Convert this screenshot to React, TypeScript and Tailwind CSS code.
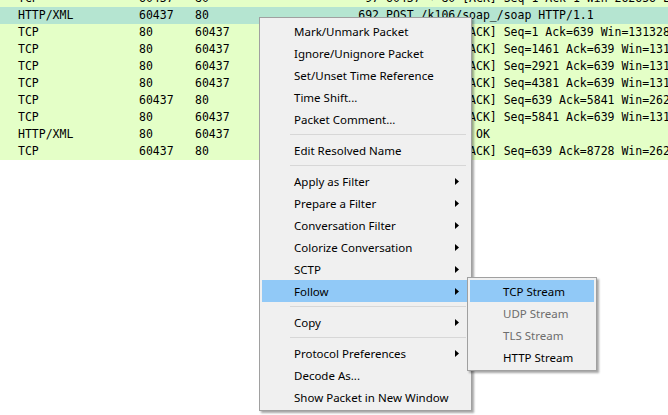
import React from "react";

type Row = { proto: string; src: string; dst: string; len: string; info: string; selected?: boolean };

const rows: Row[] = [
  { proto: "TCP", src: "60437", dst: "80", len: "97", info: "60437 → 80 [ACK] Seq=1 Ack=1 Win=262656 Len=0" },
  { proto: "HTTP/XML", src: "60437", dst: "80", len: "692", info: "POST /k106/soap_/soap HTTP/1.1", selected: true },
  { proto: "TCP", src: "80", dst: "60437", len: "1514", info: "80 → 60437 [ACK] Seq=1 Ack=639 Win=131328 Len=1460" },
  { proto: "TCP", src: "80", dst: "60437", len: "1514", info: "80 → 60437 [ACK] Seq=1461 Ack=639 Win=131328 Len=1460" },
  { proto: "TCP", src: "80", dst: "60437", len: "1514", info: "80 → 60437 [ACK] Seq=2921 Ack=639 Win=131328 Len=1460" },
  { proto: "TCP", src: "80", dst: "60437", len: "1514", info: "80 → 60437 [ACK] Seq=4381 Ack=639 Win=131328 Len=1460" },
  { proto: "TCP", src: "60437", dst: "80", len: "54", info: "60437 → 80 [ACK] Seq=639 Ack=5841 Win=262656 Len=0" },
  { proto: "TCP", src: "80", dst: "60437", len: "1514", info: "80 → 60437 [ACK] Seq=5841 Ack=639 Win=131328 Len=1460" },
  { proto: "HTTP/XML", src: "80", dst: "60437", len: "1481", info: "HTTP/1.1 200 OK" },
  { proto: "TCP", src: "60437", dst: "80", len: "54", info: "60437 → 80 [ACK] Seq=639 Ack=8728 Win=262656 Len=0" },
];

type Item = { label: string; sub?: boolean; active?: boolean } | "sep";

const menu: Item[] = [
  { label: "Mark/Unmark Packet" },
  { label: "Ignore/Unignore Packet" },
  { label: "Set/Unset Time Reference" },
  { label: "Time Shift..." },
  { label: "Packet Comment..." },
  "sep",
  { label: "Edit Resolved Name" },
  "sep",
  { label: "Apply as Filter", sub: true },
  { label: "Prepare a Filter", sub: true },
  { label: "Conversation Filter", sub: true },
  { label: "Colorize Conversation", sub: true },
  { label: "SCTP", sub: true },
  { label: "Follow", sub: true, active: true },
  "sep",
  { label: "Copy", sub: true },
  "sep",
  { label: "Protocol Preferences", sub: true },
  { label: "Decode As..." },
  { label: "Show Packet in New Window" },
];

const follow = [
  { label: "TCP Stream", active: true },
  { label: "UDP Stream", disabled: true },
  { label: "TLS Stream", disabled: true },
  { label: "HTTP Stream" },
];

function Arrow() {
  return (
    <svg width="4" height="7" viewBox="0 0 4 7" className="block">
      <path d="M0 0 L4 3.5 L0 7 Z" fill="#000" />
    </svg>
  );
}

export default function App() {
  return (
    <div className="relative w-[668px] h-[415px] overflow-hidden bg-white">
      <div className="-mt-[10px] font-['DejaVu_Sans_Mono',monospace] text-[11.5px] text-black">
        {rows.map((r, i) => (
          <div
            key={i}
            className={`flex items-center h-[17px] whitespace-nowrap ${r.selected ? "bg-[#b5e5d1]" : "bg-[#e4ffc7]"}`}
          >
            <span className="shrink-0 pl-[18px] w-[139px]">{r.proto}</span>
            <span className="shrink-0 w-[56px]">{r.src}</span>
            <span className="shrink-0 w-[70px]">{r.dst}</span>
            <span className="shrink-0 w-[114px] text-right">{r.len}</span>
            <span className="shrink-0 pl-[7px]">{r.info}</span>
          </div>
        ))}
      </div>

      {/* context menu */}
      <div className="absolute left-[259px] top-[17px] w-[213px] bg-[#f0f0f0] border border-[#a0a0a0] p-[2px] shadow-[2px_2px_2px_rgba(0,0,0,0.35)] font-['Noto_Sans',sans-serif] text-[11.5px] text-black">
        {menu.map((m, i) =>
          m === "sep" ? (
            <div key={i} className="h-[9px] flex items-center pl-[28px] pr-[3px]">
              <div className="h-px w-full bg-[#d7d7d7]" />
            </div>
          ) : (
            <div
              key={i}
              className={`h-[22px] flex items-center justify-between pl-[32px] pr-[10px] ${m.active ? "bg-[#91c9f7]" : ""}`}
            >
              <span className="pt-[2px]">{m.label}</span>
              {m.sub && <Arrow />}
            </div>
          )
        )}
      </div>

      {/* submenu */}
      <div className="absolute left-[467px] top-[277px] w-[130px] bg-[#f0f0f0] border border-[#a0a0a0] p-[2px] shadow-[2px_2px_2px_rgba(0,0,0,0.35)] font-['Noto_Sans',sans-serif] text-[11.5px]">
        {follow.map((f, i) => (
          <div
            key={i}
            className={`h-[22px] flex items-center pl-[33px] ${f.active ? "bg-[#91c9f7]" : ""} ${f.disabled ? "text-[#6d6d6d]" : "text-black"}`}
          >
            <span className="pt-[2px]">{f.label}</span>
          </div>
        ))}
      </div>
    </div>
  );
}
